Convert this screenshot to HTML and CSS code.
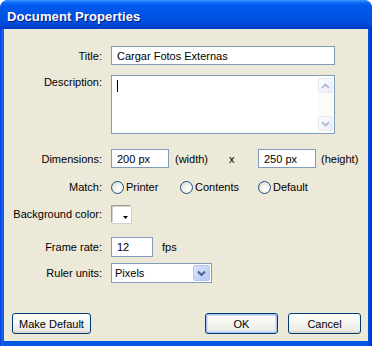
FILE: index.html
```html
<!DOCTYPE html>
<html>
<head>
<meta charset="utf-8">
<link rel="stylesheet" href="styles.css">
</head>
<body>
<div class="window">
  <div class="titlebar"><span class="title">Document Properties</span></div>
  <div class="client">
    <div class="row r-title">
      <span class="lbl">Title:</span>
      <div class="field wide">Cargar Fotos Externas</div>
    </div>
    <div class="row r-desc">
      <span class="lbl lbl-top">Description:</span>
      <div class="field area">
        <span class="caret"></span>
        <div class="scroll">
          <span class="sbtn"><svg width="9" height="6" viewBox="0 0 9 6"><path d="M1 5 L4.5 1.5 L8 5" fill="none" stroke="#A6B3CF" stroke-width="1.6"/></svg></span>
          <span class="track"></span>
          <span class="sbtn"><svg width="9" height="6" viewBox="0 0 9 6"><path d="M1 1 L4.5 4.5 L8 1" fill="none" stroke="#A6B3CF" stroke-width="1.6"/></svg></span>
        </div>
      </div>
    </div>
    <div class="row r-dims">
      <span class="lbl">Dimensions:</span>
      <div class="line">
        <div class="field dim">200 px</div>
        <span class="unit-w">(width)</span>
        <span class="times">x</span>
        <div class="field dim">250 px</div>
        <span class="unit-h">(height)</span>
      </div>
    </div>
    <div class="row r-match">
      <span class="lbl">Match:</span>
      <div class="line">
        <span class="opt o1"><span class="radio"></span>Printer</span>
        <span class="opt o2"><span class="radio"></span>Contents</span>
        <span class="opt"><span class="radio"></span>Default</span>
      </div>
    </div>
    <div class="row r-bg">
      <span class="lbl">Background color:</span>
      <div class="line"><span class="swatch"><svg class="tri" width="5" height="3" viewBox="0 0 5 3"><path d="M0 0 H5 L2.5 3 Z" fill="#000"/></svg></span></div>
    </div>
    <div class="row r-frame">
      <span class="lbl">Frame rate:</span>
      <div class="line">
        <div class="field fps">12</div>
        <span class="fps-lbl">fps</span>
      </div>
    </div>
    <div class="row r-ruler">
      <span class="lbl">Ruler units:</span>
      <div class="line">
        <div class="field select">Pixels
          <span class="dd"><svg width="9" height="7" viewBox="0 0 9 7"><path d="M1 1.5 L4.5 5 L8 1.5" fill="none" stroke="#4D6185" stroke-width="2"/></svg></span>
        </div>
      </div>
    </div>
    <div class="footer">
      <span class="btn b-make">Make Default</span>
      <span class="spacer"></span>
      <span class="btn b-ok">OK</span>
      <span class="btn b-cancel">Cancel</span>
    </div>
  </div>
</div>
</body>
</html>
```

FILE: styles.css
```css
html, body {
  margin: 0;
  padding: 0;
  background: #ffffff;
}
.window {
  width: 372px;
  height: 346px;
  display: flex;
  flex-direction: column;
  background: linear-gradient(to right, #0831D9 0, #166AEE 2px, #0055E5 4px, #0055E5 368px, #0831D9 371px);
  border-radius: 8px 8px 0 0;
  overflow: hidden;
  font-family: "Liberation Sans", Arial, sans-serif;
  font-size: 11px;
  color: #000;
}
.titlebar {
  height: 29px;
  flex: none;
  box-sizing: border-box;
  padding-left: 7px;
  display: flex;
  align-items: center;
  background: linear-gradient(to bottom, #3D95FF 0, #0A66F4 3px, #0058EE 6px, #0055E5 14px, #0050DD 22px, #0046D2 26px, #003DBF 28px, #0831D9 29px);
  border-radius: 8px 8px 0 0;
}
.title {
  color: #fff;
  font-weight: bold;
  font-size: 13px;
  letter-spacing: 0.1px;
  text-shadow: 1px 1px 0 #0A1880;
  margin-top: 3px;
}
.client {
  flex: none;
  height: 312px;
  margin: 0 4px 0 4px;
  background: #ECE9D8;
  box-sizing: border-box;
  padding-top: 17px;
  display: flex;
  flex-direction: column;
}
.row {
  display: grid;
  grid-template-columns: 98px 1fr;
  column-gap: 9px;
  align-items: center;
}
.lbl {
  text-align: right;
  white-space: nowrap;
}
.lbl-top {
  align-self: start;
  padding-top: 1px;
}
.line {
  display: flex;
  align-items: center;
}
.field {
  box-sizing: border-box;
  background: #fff;
  border: 1px solid #7F9DB9;
  padding-left: 5px;
  display: flex;
  align-items: center;
  white-space: nowrap;
}
.wide {
  width: 224px;
  height: 19px;
}
.r-title { height: 19px; }
.r-desc { margin-top: 10px; height: 59px; }
.area {
  width: 224px;
  height: 59px;
  position: relative;
  align-items: flex-start;
}
.caret {
  display: block;
  width: 1px;
  height: 12px;
  background: #000;
  margin-top: 4px;
}
.scroll {
  position: absolute;
  right: 1px;
  top: 2px;
  bottom: 2px;
  width: 15px;
  display: flex;
  flex-direction: column;
}
.sbtn {
  width: 15px;
  height: 15px;
  box-sizing: border-box;
  border: 1px solid #E4E9F2;
  border-radius: 2px;
  background: linear-gradient(to bottom right, #FBFCFD, #E9EEF5);
  display: flex;
  align-items: center;
  justify-content: center;
}
.track {
  flex: 1;
  background: #FBFBF8;
}
.r-dims { margin-top: 15px; height: 19px; }
.dim {
  width: 58px;
  height: 19px;
}
.unit-w {
  margin-left: 6px;
  width: 54px;
}
.times {
  width: 29px;
}
.unit-h {
  margin-left: 5px;
}
.r-match { margin-top: 12px; height: 14px; }
.opt {
  display: flex;
  align-items: center;
}
.o1 { width: 69px; }
.o2 { width: 78px; }
.radio {
  width: 13px;
  height: 13px;
  box-sizing: border-box;
  border-radius: 50%;
  border: 1px solid #1C5180;
  background: radial-gradient(circle at 65% 65%, #FFFFFF 0, #F3F3EF 40%, #DCD7CB 100%);
  margin-right: 2px;
}
.r-bg { margin-top: 11px; height: 18px; }
.swatch {
  position: relative;
  width: 20px;
  height: 18px;
  box-sizing: border-box;
  background: #fff;
  border-top: 1px solid #9D9D9D;
  border-left: 1px solid #9D9D9D;
  border-right: 1px solid #FFFFFF;
  border-bottom: 1px solid #FFFFFF;
  box-shadow: inset 1px 1px 0 #D4D0C8, 1px 1px 0 #D4D0C8;
}
.tri {
  position: absolute;
  right: 2px;
  bottom: 3px;
}
.r-frame { margin-top: 14px; height: 20px; }
.fps {
  width: 42px;
  height: 20px;
}
.fps-lbl { margin-left: 9px; }
.r-ruler { margin-top: 6px; height: 20px; }
.select {
  width: 101px;
  height: 20px;
  position: relative;
  padding-left: 3px;
}
.dd {
  position: absolute;
  right: 1px;
  top: 1px;
  width: 17px;
  height: 16px;
  box-sizing: border-box;
  border: 1px solid #B7C9F0;
  border-radius: 2px;
  background: linear-gradient(to bottom right, #D8E4FC, #B6CAF5);
  display: flex;
  align-items: center;
  justify-content: center;
}
.footer {
  margin-top: 30px;
  display: flex;
  padding: 0 7px 0 8px;
}
.spacer { flex: 1; }
.btn {
  box-sizing: border-box;
  height: 21px;
  border: 1px solid #003C74;
  border-radius: 3px;
  background: linear-gradient(to bottom, #FFFFFF 0, #F4F4F0 50%, #ECEBE6 85%, #D6D0C5 100%);
  display: flex;
  align-items: center;
  justify-content: center;
  white-space: nowrap;
}
.b-make { width: 79px; }
.b-ok {
  width: 73px;
  box-shadow: inset 0 0 0 1px #A9C4F5, inset 0 0 0 2px #CEDDF8;
}
.b-cancel {
  width: 73px;
  margin-left: 10px;
}
```
